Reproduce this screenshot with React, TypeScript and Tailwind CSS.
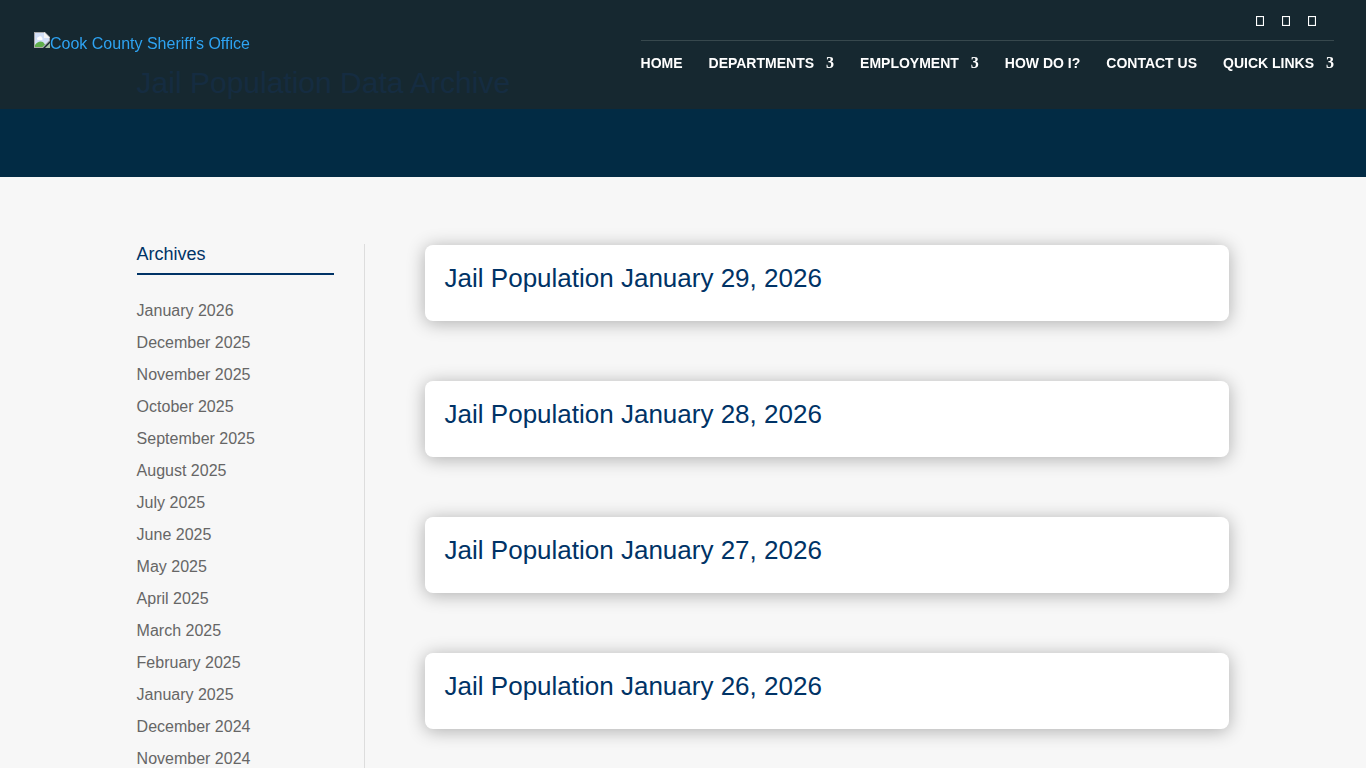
/* ── Data ─────────────────────────────────────────────────────── */
const NAV_ITEMS = [
  { label: 'Home', hasMenu: false },
  { label: 'Departments', hasMenu: true },
  { label: 'Employment', hasMenu: true },
  { label: 'How Do I?', hasMenu: false },
  { label: 'Contact Us', hasMenu: false },
  { label: 'Quick Links', hasMenu: true },
]

const SOCIAL_LINKS = ['Facebook', 'X', 'Instagram']

const ARCHIVES = [
  'January 2026',
  'December 2025',
  'November 2025',
  'October 2025',
  'September 2025',
  'August 2025',
  'July 2025',
  'June 2025',
  'May 2025',
  'April 2025',
  'March 2025',
  'February 2025',
  'January 2025',
  'December 2024',
  'November 2024',
]

const POSTS = ['January 29, 2026', 'January 28, 2026', 'January 27, 2026', 'January 26, 2026']

function MissingImageIcon() {
  return (
    <svg width="16" height="16" viewBox="0 0 16 16" aria-hidden="true" className="shrink-0">
      <path d="M0 0h11l5 5v4L9 16H0z" fill="#a9a9a9" />
      <path d="M1 1h9v5h5v2.5L8.500 15H1z" fill="#d3e0f8" />
      <path d="M3 6.500a1.500 1.500 0 0 1 1.500-1.500 2 2 0 0 1 3.500 1 1.200 1.200 0 0 1 0 2H4a1.300 1.300 0 0 1-1-1.500z" fill="#fff" />
      <path d="M1 15v-2c2-3 5-4.500 8-3l2 2.500-2.500 2.500z" fill="#5faf4c" />
      <path d="M10 0l6 6h-6z" fill="#f5f5f5" />
      <path d="M16 11v5h-5z" fill="#a9c3a5" />
    </svg>
  )
}

/* Empty box, drawn where the social icon font has no glyph */
function GlyphBox() {
  return (
    <svg width="8" height="10" viewBox="0 0 8 10" aria-hidden="true">
      <rect x="0.500" y="0.500" width="7" height="9" fill="none" stroke="currentColor" strokeWidth="1.2" />
    </svg>
  )
}

/* ── Header: translucent bar over the page title ──────────────── */
function Header() {
  return (
    <header className="fixed inset-x-0 top-0 z-10 flex h-[109px] items-start justify-between bg-[rgba(42,37,28,0.5)] pr-8 pl-[34px]">
      <a href="#" className="flex pt-8 text-base text-[#2ea3f2]">
        <MissingImageIcon />
        <span>Cook County Sheriff's Office</span>
      </a>

      <div className="text-white">
        <ul className="flex h-10 justify-end gap-[18px] pt-4 pr-[18px]">
          {SOCIAL_LINKS.map((name) => (
            <li key={name}>
              <a href="#" aria-label={name} className="block">
                <GlyphBox />
              </a>
            </li>
          ))}
        </ul>
        <nav className="border-t border-white/15 pt-3">
          <ul className="flex gap-[26px] text-sm font-bold uppercase leading-5">
            {NAV_ITEMS.map((item) => (
              <li key={item.label}>
                <a href="#" className="flex gap-3">
                  {item.label}
                  {item.hasMenu && (
                    <span className="font-['Liberation_Serif',serif] text-base leading-5">3</span>
                  )}
                </a>
              </li>
            ))}
          </ul>
        </nav>
      </div>
    </header>
  )
}

function Sidebar() {
  return (
    <aside className="w-[228px] shrink-0 border-r border-[#dddddd] pr-[30px]">
      <h2 className="border-b-2 border-[#003366] pb-[9px] text-lg leading-5 text-[#003366]">Archives</h2>
      <ul className="pt-5 text-base leading-8 text-[#666666]">
        {ARCHIVES.map((month) => (
          <li key={month}>
            <a href="#">{month}</a>
          </li>
        ))}
      </ul>
    </aside>
  )
}

function PostCard({ date }: { date: string }) {
  return (
    <article className="rounded-lg bg-white px-5 pt-5 pb-[30px] shadow-[0_2px_18px_rgba(0,0,0,0.3)]">
      <h2 className="text-[26px] leading-[26px] text-[#003366]">
        <a href="#">Jail Population {date}</a>
      </h2>
    </article>
  )
}

export default function App() {
  return (
    <div className="min-h-screen bg-[#f7f7f7] font-['Liberation_Sans',Arial,sans-serif]">
      <Header />

      <div className="bg-[#022b44] pt-[68px] pb-[79px]">
        <h1 className="mx-auto w-4/5 text-[30px] leading-[30px] text-[#003366]">
          Jail Population Data Archive
        </h1>
      </div>

      <main className="mx-auto flex w-4/5 pt-[67px]">
        <Sidebar />
        <section className="flex grow flex-col gap-[60px] pt-px pb-[60px] pl-[60px]">
          {POSTS.map((date) => (
            <PostCard key={date} date={date} />
          ))}
        </section>
      </main>
    </div>
  )
}
